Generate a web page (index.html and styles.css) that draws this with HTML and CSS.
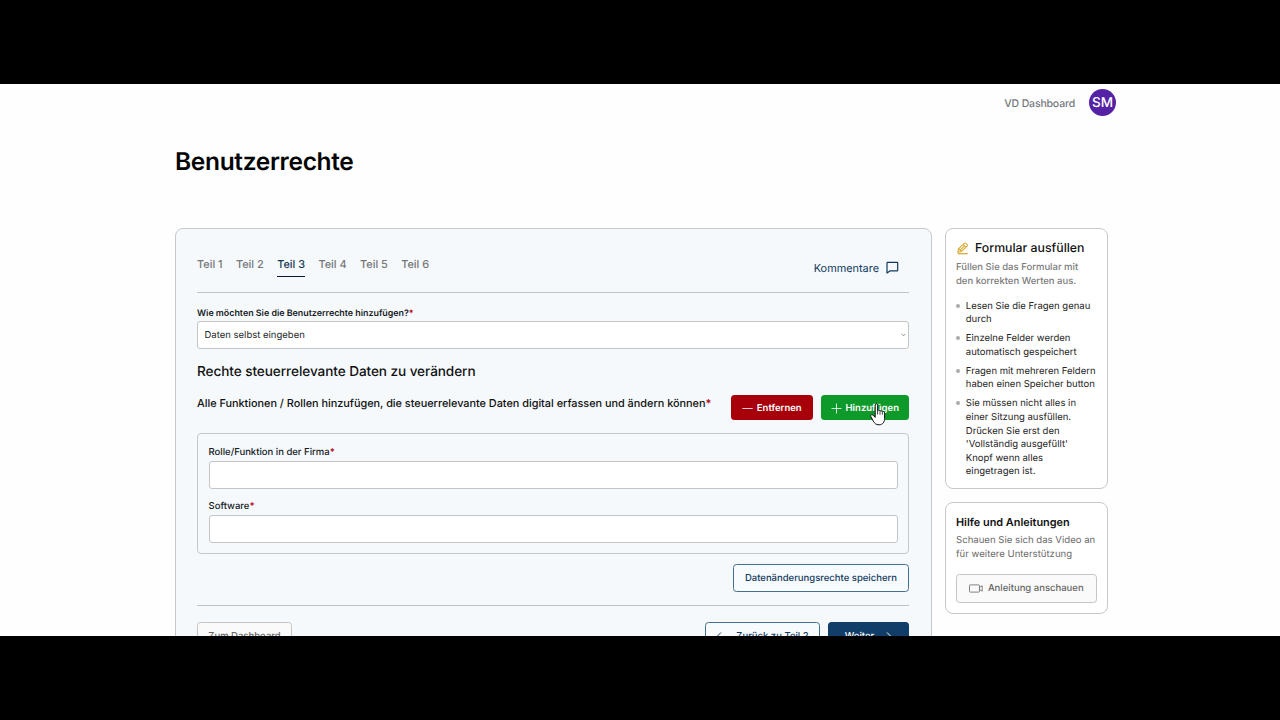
FILE: index.html
```html
<!DOCTYPE html>
<html lang="de">
<head>
<meta charset="utf-8">
<title>Benutzerrechte</title>
<link rel="stylesheet" href="styles.css">
</head>
<body>
<div class="screen">
  <header class="topbar">
    <a class="toplink">VD Dashboard</a>
    <span class="avatar">SM</span>
  </header>
  <h1 class="title">Benutzerrechte</h1>
  <div class="columns">
    <main class="card">
      <div class="tabrow">
        <nav class="tabs">
          <a class="tab">Teil 1</a><a class="tab">Teil 2</a><a class="tab active">Teil 3</a><a class="tab">Teil 4</a><a class="tab">Teil 5</a><a class="tab">Teil 6</a>
        </nav>
        <a class="comments">Kommentare
          <svg width="13" height="13" viewBox="0 0 13 13" fill="none" stroke="#123a5e" stroke-width="1.2" stroke-linejoin="round"><path d="M1.6 1.3h9.5q.6 0 .6.6v7.4q0 .6-.6.6H3.9L1 12V1.9q0-.6.6-.6z"/></svg>
        </a>
      </div>
      <label class="label main-label">Wie möchten Sie die Benutzerrechte hinzufügen?<b>*</b></label>
      <div class="field select"><span>Daten selbst eingeben</span>
        <svg width="5" height="4" viewBox="0 0 5 4" fill="none" stroke="#777" stroke-width=".8"><path d="M.5.8l2 2 2-2"/></svg>
      </div>
      <h2 class="subtitle">Rechte steuerrelevante Daten zu verändern</h2>
      <div class="actions">
        <p class="question">Alle Funktionen / Rollen hinzufügen, die steuerrelevante Daten digital erfassen und ändern können<b>*</b></p>
        <button class="btn red"><svg width="11" height="11" viewBox="0 0 11 11" stroke="#fff" stroke-width=".8"><path d="M.3 5.5h10.4"/></svg>Entfernen</button>
        <button class="btn green"><svg width="11" height="11" viewBox="0 0 11 11" stroke="#fff" stroke-width=".8"><path d="M.5 5.5h10M5.5.5v10"/></svg>Hinzufügen</button>
        <svg class="cursor" width="17" height="24" viewBox="0 0 17 24"><path d="M5.2 2.1c0-1.7 2.4-1.7 2.4 0v5.7c.5-1 2.3-.8 2.4.5.6-.9 2.2-.7 2.4.6.7-.7 2.2-.3 2.2 1v5.3c0 3.7-1.8 6.6-5.5 6.6-3.1 0-4.6-1.5-5.8-3.7L.8 13.5c-.7-1.5 1.1-2.6 2.3-1.3l2.1 2.2z" fill="#fff" stroke="#111" stroke-width="1"/><path d="M7.6 7.5v4M10 8.5v3M12.4 9.3v2.3" stroke="#111" stroke-width=".8"/></svg>
      </div>
      <section class="group">
        <label class="label">Rolle/Funktion in der Firma<b>*</b></label>
        <div class="field"></div>
        <label class="label second">Software<b>*</b></label>
        <div class="field"></div>
      </section>
      <div class="saverow"><button class="btn outline save">Datenänderungsrechte speichern</button></div>
      <footer class="foot">
        <button class="btn plain">Zum Dashboard</button>
        <span class="spacer"></span>
        <button class="btn outline back"><svg width="11" height="11" viewBox="0 0 11 11" fill="none" stroke="#123a5e"><path d="M10.5 5.5H1M5 1.5l-4 4 4 4"/></svg>Zurück zu Teil 2</button>
        <button class="btn next">Weiter<svg width="11" height="11" viewBox="0 0 11 11" fill="none" stroke="#fff"><path d="M.5 5.5H10M6 1.5l4 4-4 4"/></svg></button>
      </footer>
    </main>
    <aside class="side">
      <section class="panel guide">
        <h3 class="guide-title"><svg width="13" height="13" viewBox="0 0 13 13" fill="none" stroke="#d9ac38" stroke-width="1.1"><path d="M1.8 11.7h10" stroke-width="1.3"/><path d="M1.8 10.2l.8-3.4 5.6-5.4q.8-.8 1.6 0l1.3 1.2q.7.8 0 1.5L5.3 9.5z"/><path d="M2.6 6.8l2.8 2.6M7.2 2.5l2.8 2.7M4.1 8.2l4.8-4.6"/></svg>Formular ausfüllen</h3>
        <p class="muted">Füllen Sie das Formular mit<br>den korrekten Werten aus.</p>
        <ul class="list">
          <li>Lesen Sie die Fragen genau<br>durch</li>
          <li>Einzelne Felder werden<br>automatisch gespeichert</li>
          <li>Fragen mit mehreren Feldern<br>haben einen Speicher button</li>
          <li>Sie müssen nicht alles in<br>einer Sitzung ausfüllen.<br>Drücken Sie erst den<br>'Vollständig ausgefüllt'<br>Knopf wenn alles<br>eingetragen ist.</li>
        </ul>
      </section>
      <section class="panel help">
        <h3 class="help-title">Hilfe und Anleitungen</h3>
        <p class="muted">Schauen Sie sich das Video an<br>für weitere Unterstützung</p>
        <button class="btn plain video"><svg width="14" height="9" viewBox="0 0 14 9" fill="none" stroke="#666" stroke-width=".8"><rect x=".5" y=".9" width="10" height="7.2" rx=".8"/><path d="M10.5 3.3l2.7-1.5v5.4l-2.7-1.5"/></svg>Anleitung anschauen</button>
      </section>
    </aside>
  </div>
</div>
</body>
</html>
```
FILE: styles.css
```css
* { box-sizing: border-box; }
body { margin: 0; height: 720px; overflow: hidden; background: #000; padding-top: 84px; font-family: Inter, "Liberation Sans", sans-serif; color: #111; text-rendering: geometricPrecision; }
h1, h2, h3, p, ul { margin: 0; padding: 0; }
svg { flex: none; display: block; }
b { color: #b3000c; font-weight: 600; }
.screen { height: 551.5px; width: 1280px; overflow: hidden; background: #fefefe; padding: 0 164px 0 175px; }
.topbar { height: 37px; display: flex; justify-content: flex-end; align-items: center; gap: 14px; }
.toplink { font-size: 10.5px; font-weight: 500; letter-spacing: -.16px; color: #74797d; padding-top: 2px; }
.avatar { width: 27px; height: 27px; border-radius: 50%; background: #5522a5; color: #fff; font-size: 13.5px; font-weight: 500; display: flex; align-items: center; justify-content: center; }
.title { height: 107.4px; padding-top: 23px; font-size: 24.5px; line-height: 34px; font-weight: 600; letter-spacing: -.32px; color: #050505; }
.columns { display: flex; gap: 13px; align-items: flex-start; }
.card { width: 757px; height: 480px; border: 1px solid #c6c9cc; border-radius: 8px; background: #f5f9fc; padding: 20px 22px 0 21px; }
.tabrow { height: 43.5px; display: flex; justify-content: space-between; border-bottom: 1px solid #bfc4c8; }
.tabs { display: flex; gap: 13.4px; align-self: flex-start; padding-top: 7px; }
.tab { height: 21px; line-height: 16px; font-size: 10.9px; font-weight: 500; color: #757779; }
.active { color: #153954; border-bottom: 1.5px solid #0b1733; }
.comments { display: flex; align-items: center; gap: 7px; height: 37px; padding-right: 10px; font-size: 10.9px; color: #123a5e; }
.label { display: block; height: 14px; line-height: 15px; font-size: 9.5px; font-weight: 500; color: #151a1e; }
.main-label { margin-top: 13.5px; margin-bottom: .6px; font-size: 8.9px; font-weight: 600; }
.field { height: 28px; border: 1px solid #c3c5c7; border-radius: 3px; background: #fff; }
.select { display: flex; align-items: center; justify-content: space-between; padding: 0 2px 0 6.5px; font-size: 9.5px; color: #26292b; }
.select span { padding-top: 1px; }
.subtitle { margin-top: 13.5px; font-size: 13.6px; line-height: 20px; height: 19px; font-weight: 500; letter-spacing: -.08px; }
.actions { position: relative; display: flex; align-items: flex-start; height: 52px; padding-top: 14px; }
.question { flex: 1; font-size: 10.9px; line-height: 17.6px; font-weight: 500; letter-spacing: -.02px; white-space: nowrap; }
.btn { font-family: inherit; font-size: 9.5px; font-weight: 500; border: 0; border-radius: 3.5px; padding: 1px 0 0; display: flex; align-items: center; justify-content: center; gap: 3.5px; color: #fff; white-space: nowrap; text-rendering: inherit; }
.red { width: 82px; height: 25px; background: #a8000b; margin-right: 8px; font-weight: 600; }
.green { width: 88px; height: 25px; background: #0e9a2b; font-weight: 600; }
.cursor { position: absolute; right: 22px; top: 22px; }
.group { height: 120.5px; border: 1px solid #c3c8cc; border-radius: 4px; padding: 11px 10.5px 0; }
.group .label { margin-bottom: 1.7px; }
.group .second { margin-top: 10px; }
.saverow { display: flex; justify-content: flex-end; padding: 10.5px 0 12.5px; border-bottom: 1px solid #bfc4c8; }
.outline { background: #f8fbfd; border: 1px solid #45708d; color: #123a5e; }
.save { width: 176px; height: 28px; }
.foot { display: flex; padding-top: 16px; }
.spacer { flex: 1; }
.plain { background: #fafafa; border: 1px solid #c5c5c5; color: #666; }
.foot .btn { height: 27.5px; }
.foot .plain { width: 95px; }
.back { width: 115px; margin-right: 8px; gap: 9px; }
.next { width: 81px; background: #103e68; gap: 7px; }
.side { width: 163px; display: flex; flex-direction: column; gap: 13.5px; }
.panel { border: 1px solid #c8c8c8; border-radius: 8px; background: #fff; padding: 10px; }
.guide { height: 260.5px; }
.guide-title { display: flex; align-items: center; gap: 6px; height: 18px; font-size: 12.3px; line-height: 16px; font-weight: 500; white-space: nowrap; }
.muted { font-size: 9.5px; line-height: 13.6px; font-weight: 500; color: #7b7b7b; white-space: nowrap; margin-top: 3.8px; }
.help .muted { font-weight: 400; font-size: 9.6px; color: #6b6b6b; margin-top: 2.8px; }
.list { list-style: none; margin-top: 11.3px; display: flex; flex-direction: column; gap: 5.4px; }
.list li { position: relative; padding-left: 9.8px; font-size: 9.5px; line-height: 13.6px; color: #242424; white-space: nowrap; }
.list li::before { content: ""; position: absolute; left: 0; top: 4px; width: 4px; height: 4px; border-radius: 50%; background: #aaa; }
.help { height: 111.5px; padding-top: 10.8px; }
.help-title { font-size: 10.9px; line-height: 17px; font-weight: 600; }
.video { width: 140.5px; height: 29px; margin-top: 12.7px; gap: 5px; }
```
